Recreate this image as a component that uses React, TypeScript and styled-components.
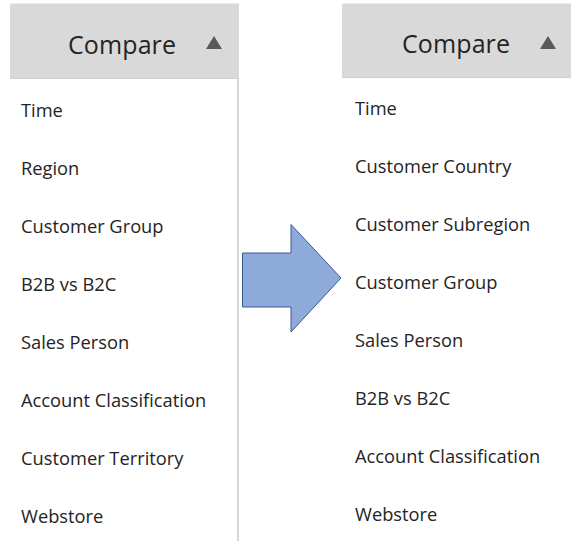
import React from 'react'
import styled, { createGlobalStyle } from 'styled-components'

const GlobalStyle = createGlobalStyle`
  html, body {
    margin: 0;
    padding: 0;
    background: #ffffff;
  }
  body {
    font-family: 'Open Sans', 'Noto Sans', sans-serif;
    color: #252423;
  }
`

const Page = styled.div`
  width: 578px;
  height: 554px;
  display: flex;
  align-items: flex-start;
  overflow: hidden;
`

const Panel = styled.div<{ $left: number; $top: number; $width: number }>`
  margin-left: ${(p) => p.$left}px;
  margin-top: ${(p) => p.$top}px;
  width: ${(p) => p.$width}px;
  flex-shrink: 0;
  display: flex;
  flex-direction: column;
`

const Header = styled.div<{ $height: number; $pad: number }>`
  height: ${(p) => p.$height}px;
  background: #d9d9d9;
  border-top: 1px solid #ececec;
  border-bottom: 1px solid #d0d0d0;
  box-sizing: border-box;
  display: flex;
  align-items: center;
  padding-left: ${(p) => p.$pad}px;
  padding-top: 5px;
`

const Title = styled.span`
  font-size: 25px;
  color: #252423;
  letter-spacing: 0.1px;
`

const Caret = styled.span`
  width: 0;
  height: 0;
  margin-left: 30px;
  margin-top: -2px;
  border-left: 8px solid transparent;
  border-right: 8px solid transparent;
  border-bottom: 13px solid #595959;
`

const List = styled.div<{ $border: boolean; $height: number; $pad: number }>`
  height: ${(p) => p.$height}px;
  padding-top: ${(p) => p.$pad}px;
  box-sizing: border-box;
  border-right: ${(p) => (p.$border ? '2px solid #d6d6d6' : 'none')};
  display: flex;
  flex-direction: column;
`

const Item = styled.div<{ $indent: number }>`
  height: 58px;
  flex-shrink: 0;
  display: flex;
  align-items: center;
  padding-left: ${(p) => p.$indent}px;
  font-size: 18.3px;
  color: #252423;
  white-space: nowrap;
`

const ArrowBox = styled.div`
  margin-top: 224px;
  margin-left: 3px;
  width: 100px;
  height: 112px;
  flex-shrink: 0;
`

const leftItems = [
  'Time',
  'Region',
  'Customer Group',
  'B2B vs B2C',
  'Sales Person',
  'Account Classification',
  'Customer Territory',
  'Webstore',
]

const rightItems = [
  'Time',
  'Customer Country',
  'Customer Subregion',
  'Customer Group',
  'Sales Person',
  'B2B vs B2C',
  'Account Classification',
  'Webstore',
]

const Arrow = () => (
  <svg width="100" height="112" viewBox="0 0 100 112">
    <polygon
      points="0.5,29 49,29 49,0.5 99,54 49,108 49,83 0.5,83"
      fill="#8eaadb"
      stroke="#3b5a94"
      strokeWidth="1"
    />
  </svg>
)

export default function App() {
  return (
    <Page>
      <GlobalStyle />
      <Panel $left={10} $top={3} $width={229}>
        <Header $height={76} $pad={58}>
          <Title>Compare</Title>
          <Caret />
        </Header>
        <List $border={true} $height={462} $pad={1}>
          {leftItems.map((label) => (
            <Item key={label} $indent={11}>
              {label}
            </Item>
          ))}
        </List>
      </Panel>
      <ArrowBox>
        <Arrow />
      </ArrowBox>
      <Panel $left={0} $top={3} $width={229}>
        <Header $height={75} $pad={60}>
          <Title>Compare</Title>
          <Caret />
        </Header>
        <List $border={false} $height={470} $pad={0}>
          {rightItems.map((label) => (
            <Item key={label} $indent={13}>
              {label}
            </Item>
          ))}
        </List>
      </Panel>
    </Page>
  )
}
